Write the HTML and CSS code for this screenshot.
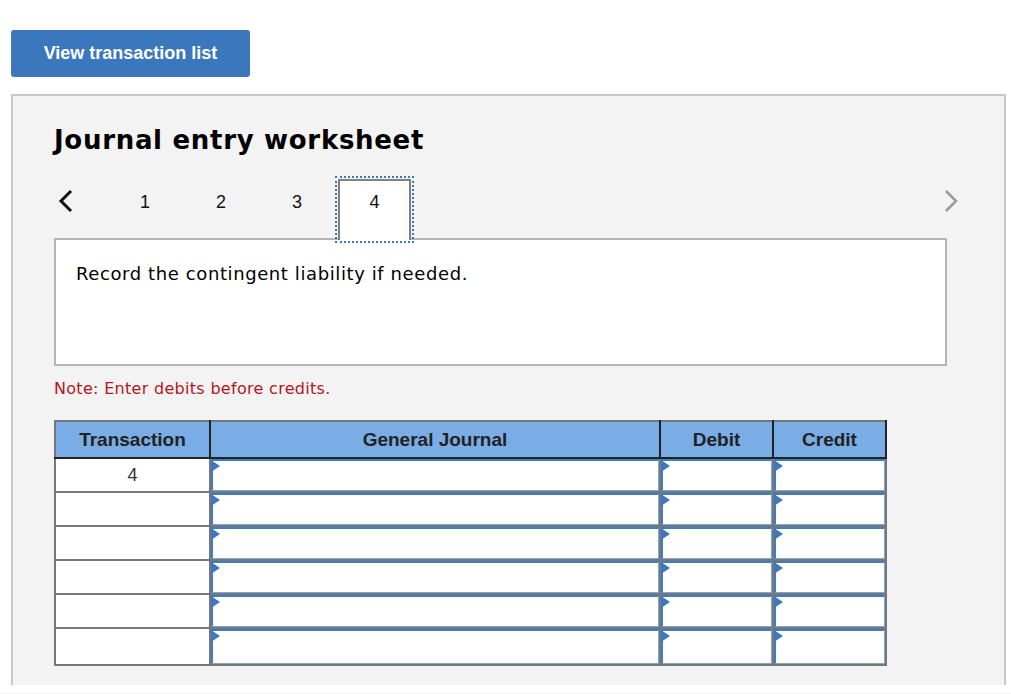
FILE: index.html
```html
<!DOCTYPE html>
<html lang="en">
<head>
    <meta charset="UTF-8">
    <title>Journal entry worksheet</title>
    <link rel="stylesheet" href="styles.css">
</head>
<body>
    <div class="page">
        <button class="list-btn" type="button">View transaction list</button>

        <div class="panel">
            <h1 class="title">Journal entry worksheet</h1>

            <div class="steps">
                <span class="step-prev">
                    <svg width="16" height="24" viewBox="0 0 16 24"><polyline points="13,2 3,12 13,22" fill="none" stroke="#111" stroke-width="3"/></svg>
                </span>
                <span class="step">1</span>
                <span class="step">2</span>
                <span class="step">3</span>
                <span class="step step-active">4</span>
                <span class="step-next">
                    <svg width="16" height="24" viewBox="0 0 16 24"><polyline points="2,2 12,12 2,22" fill="none" stroke="#9a9a9a" stroke-width="2.5"/></svg>
                </span>
            </div>

            <div class="prompt">Record the contingent liability if needed.</div>

            <p class="note">Note: Enter debits before credits.</p>

            <table class="journal">
                <colgroup>
                    <col class="c-trans">
                    <col class="c-acct">
                    <col class="c-amt">
                    <col class="c-amt">
                </colgroup>
                <thead>
                    <tr>
                        <th>Transaction</th>
                        <th>General Journal</th>
                        <th>Debit</th>
                        <th>Credit</th>
                    </tr>
                </thead>
                <tbody>
                    <tr>
                        <td class="trans">4</td>
                        <td><div class="field"><span class="flag"></span></div></td>
                        <td><div class="field"><span class="flag"></span></div></td>
                        <td><div class="field"><span class="flag"></span></div></td>
                    </tr>
                    <tr>
                        <td class="trans"></td>
                        <td><div class="field"><span class="flag"></span></div></td>
                        <td><div class="field"><span class="flag"></span></div></td>
                        <td><div class="field"><span class="flag"></span></div></td>
                    </tr>
                    <tr>
                        <td class="trans"></td>
                        <td><div class="field"><span class="flag"></span></div></td>
                        <td><div class="field"><span class="flag"></span></div></td>
                        <td><div class="field"><span class="flag"></span></div></td>
                    </tr>
                    <tr>
                        <td class="trans"></td>
                        <td><div class="field"><span class="flag"></span></div></td>
                        <td><div class="field"><span class="flag"></span></div></td>
                        <td><div class="field"><span class="flag"></span></div></td>
                    </tr>
                    <tr>
                        <td class="trans"></td>
                        <td><div class="field"><span class="flag"></span></div></td>
                        <td><div class="field"><span class="flag"></span></div></td>
                        <td><div class="field"><span class="flag"></span></div></td>
                    </tr>
                    <tr class="last-row">
                        <td class="trans"></td>
                        <td><div class="field"><span class="flag"></span></div></td>
                        <td><div class="field"><span class="flag"></span></div></td>
                        <td><div class="field"><span class="flag"></span></div></td>
                    </tr>
                </tbody>
            </table>
        </div>

        <div class="strip"></div>
    </div>
</body>
</html>
```

FILE: styles.css
```css
body {
    margin: 0;
    background: #fff;
    font-family: "Liberation Sans", Arial, sans-serif;
    color: #111;
}
.page {
    padding: 30px 5px 0 11px;
}
.list-btn {
    display: block;
    width: 239px;
    height: 47px;
    border: 0;
    border-radius: 3px;
    background: #3a77bd;
    color: #fff;
    font-family: "Liberation Sans", Arial, sans-serif;
    font-size: 18px;
    font-weight: bold;
    cursor: pointer;
}
.panel {
    margin-top: 17px;
    width: 995px;
    box-sizing: border-box;
    border: 2px solid #c8c8c8;
    border-bottom: 0;
    background: #f3f3f3;
    padding: 28px 57px 19px 41px;
}
.title {
    margin: 0;
    font-family: "DejaVu Sans", sans-serif;
    font-size: 26px;
    line-height: 32px;
    letter-spacing: 0.7px;
    font-weight: bold;
    color: #000;
}
/* step tabs */
.steps {
    display: flex;
    align-items: flex-start;
    margin-top: 23px;
    margin-right: -13px;
    height: 61px;
    position: relative;
    z-index: 1;
    margin-bottom: -2px;
}
.step-prev {
    width: 53px;
    padding: 10px 0 0 4px;
    box-sizing: border-box;
}
.step-next {
    margin-left: auto;
    padding-top: 10px;
}
.step {
    width: 76px;
    padding-top: 13px;
    text-align: center;
    font-size: 18px;
    line-height: 20px;
    color: #111;
}
.step-active {
    width: 73px;
    height: 61px;
    box-sizing: border-box;
    margin-left: 3px;
    padding-top: 11px;
    background: #fff;
    border: 2px solid #808080;
    border-bottom: 0;
    outline: 2px dotted #3a77bd;
    outline-offset: 1px;
}
.prompt {
    width: 893px;
    height: 128px;
    box-sizing: border-box;
    background: #fff;
    border: 2px solid #b4b4b4;
    padding: 23px 20px;
    font-family: "DejaVu Sans", sans-serif;
    font-size: 18px;
    line-height: 22px;
    letter-spacing: 0.6px;
    color: #000;
}
.note {
    margin: 13px 0 22px;
    font-family: "DejaVu Sans", sans-serif;
    font-size: 16px;
    line-height: 19px;
    letter-spacing: 0.3px;
    color: #b5161d;
}
/* journal table */
.journal {
    width: 830px;
    border-collapse: collapse;
    table-layout: fixed;
}
.c-trans { width: 155px; }
.c-acct { width: 450px; }
.c-amt { width: 113px; }
.journal th {
    height: 35px;
    background: #7aade5;
    color: #222;
    font-size: 19px;
    font-weight: bold;
    text-align: center;
    border: 2px solid #222;
    border-top-color: #777;
    padding: 0;
}
.journal th:first-child {
    border-left-color: #777;
}
.journal td {
    height: 32px;
    padding: 0;
    border: 2px solid #777;
    background: #fff;
    vertical-align: top;
}
.journal .last-row td {
    height: 35px;
}
.journal td.trans {
    text-align: center;
    vertical-align: middle;
    font-size: 18px;
    color: #333;
}
.field {
    position: relative;
    height: 32px;
    box-sizing: border-box;
    border: 1px solid #7fa7d6;
    border-top: 2px solid #3f7cc2;
    border-left: 2px solid #3f7cc2;
}
.last-row .field {
    height: 35px;
}
.flag {
    position: absolute;
    left: -2px;
    top: -1px;
    width: 0;
    height: 0;
    border-top: 6px solid transparent;
    border-bottom: 6px solid transparent;
    border-left: 9px solid #3b78c0;
}
.strip {
    margin: 8px -5px 0 -11px;
    height: 10px;
    background: #f2f2f2;
}
```
